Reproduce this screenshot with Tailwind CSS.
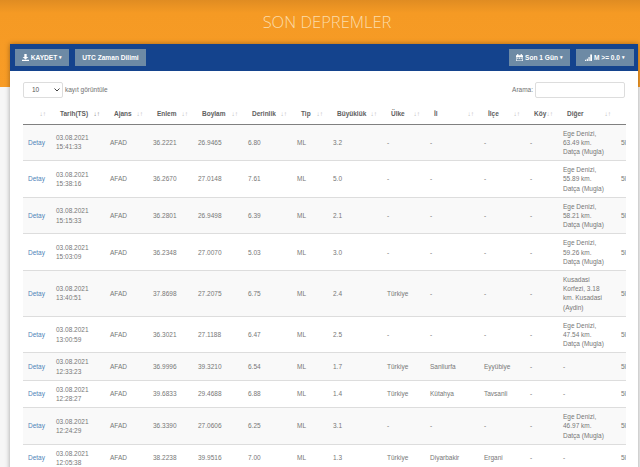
<!DOCTYPE html>
<html lang="tr">
  <head>
    <meta charset="UTF-8" />
    <title>Son Depremler</title>
    <script src="https://cdn.jsdelivr.net/npm/@tailwindcss/browser@4"></script>
  </head>
  <body class="h-[467px] overflow-hidden bg-[#f6f6f6] font-['Liberation_Sans',Arial,sans-serif]">
    <header class="h-[87px] bg-gradient-to-b from-[#e08c22] via-[#f59a24] via-15% to-[#f89c26] pt-[12px] pl-[14px] text-center">
      <h1 class="font-['Open_Sans',sans-serif] text-[16.5px] leading-[20px] font-light text-[#fbdcaa]">SON DEPREMLER</h1>
    </header>

    <main class="-mt-[43px] ml-[10px] h-[430px] w-[628px] overflow-hidden bg-white shadow-[0_0_5px_rgba(0,0,0,0.35)]">
      <div class="flex h-[27px] items-center justify-between bg-[#14438d] pr-[4px] pl-[5px] text-[6.6px] font-bold text-white">
        <div class="flex gap-[6px]">
          <button class="flex h-[17px] w-[54px] items-center justify-center gap-[2px] bg-[#6d8aa5]">
            <svg class="h-[7px] w-[7px]" viewBox="0 0 12 12" fill="white"><path d="M4 0h4v5h3L6 9.5 1 5h3zM0 10h12v2H0z" /></svg>
            KAYDET <span class="text-[5px]">▾</span>
          </button>
          <button class="h-[17px] w-[71px] bg-[#6d8aa5]">UTC Zaman Dilimi</button>
        </div>
        <div class="flex gap-[6px]">
          <button class="flex h-[17px] w-[61px] items-center justify-center gap-[2px] bg-[#6d8aa5]">
            <svg class="h-[7px] w-[7px]" viewBox="0 0 12 12" fill="white"><path d="M0 2h12v10H0zM1 5v6h10V5zM2 6h2v2H2zM5 6h2v2H5zM8 6h2v2H8zM2 0h2v2H2zM8 0h2v2H8z" /></svg>
            Son 1 Gün <span class="text-[5px]">▾</span>
          </button>
          <button class="flex h-[17px] w-[58px] items-center justify-center gap-[2px] bg-[#6d8aa5]">
            <svg class="h-[7px] w-[7px]" viewBox="0 0 12 12" fill="white"><path d="M0 10h2v2H0zM3 8h2v4H3zM6 5h2v7H6zM9 1h3v11H9z" /></svg>
            M &gt;= 0.0 <span class="text-[5px]">▾</span>
          </button>
        </div>
      </div>

      <div class="flex items-start justify-between pt-[11px] pr-[13px] pl-[13px] text-[6.5px] text-[#707070]">
        <div class="flex items-center gap-[2px]">
          <div class="flex h-[16px] w-[40px] items-center justify-between rounded-[2px] border border-[#ddd] pr-[2px] pl-[8px] text-[#555]">
            <span>10</span>
            <svg class="h-[4px] w-[6px]" viewBox="0 0 6 4" fill="none" stroke="#444" stroke-width="1"><path d="M0.5 0.5 3 3 5.5 0.5" /></svg>
          </div>
          <span>kayıt görüntüle</span>
        </div>
        <div class="flex items-center gap-[2px]">
          <span>Arama:</span>
          <div class="h-[16px] w-[90px] rounded-[2px] border border-[#ddd]"></div>
        </div>
      </div>

      <div class="mt-[6px] ml-[13px] w-[603px] overflow-hidden">
        <table class="w-[640px] table-fixed border-collapse text-left text-[6.5px] leading-[9.2px] text-[#777]">
          <colgroup>
            <col class="w-[28px]" /><col class="w-[54px]" /><col class="w-[43px]" /><col class="w-[45px]" />
            <col class="w-[50px]" /><col class="w-[49px]" /><col class="w-[36px]" /><col class="w-[54px]" />
            <col class="w-[43px]" /><col class="w-[54px]" /><col class="w-[46px]" /><col class="w-[33px]" />
            <col class="w-[58px]" /><col class="w-[47px]" />
          </colgroup>
          <thead>
            <tr id="head" class="h-[20px] border-b-[1.5px] border-[#808080]"></tr>
          </thead>
          <tbody id="rows"></tbody>
        </table>
      </div>
    </main>

    <script>
      const basliklar = ["", "Tarih(TS)", "Ajans", "Enlem", "Boylam", "Derinlik", "Tip", "Büyüklük", "Ülke", "İl", "İlçe", "Köy", "Diğer", ""];

      const ege = (km) => `Ege Denizi,<br>${km} km.<br>Datça (Mugla)`;

      const depremler = [
        ["15:41:33", "36.2221", "26.9465", "6.80", "3.2", "-", "-", "-", ege("63.49")],
        ["15:38:16", "36.2670", "27.0148", "7.61", "5.0", "-", "-", "-", ege("55.89")],
        ["15:15:33", "36.2801", "26.9498", "6.39", "2.1", "-", "-", "-", ege("58.21")],
        ["15:03:09", "36.2348", "27.0070", "5.03", "3.0", "-", "-", "-", ege("59.26")],
        ["13:40:51", "37.8698", "27.2075", "6.75", "2.4", "Türkiye", "-", "-", "Kusadasi<br>Korfezi, 3.18<br>km. Kusadasi<br>(Aydin)"],
        ["13:00:59", "36.3021", "27.1188", "6.47", "2.5", "-", "-", "-", ege("47.54")],
        ["12:33:23", "36.9996", "39.3210", "6.54", "1.7", "Türkiye", "Sanliurfa", "Eyyübiye", "-"],
        ["12:28:27", "39.6833", "29.4688", "6.88", "1.4", "Türkiye", "Kütahya", "Tavsanli", "-"],
        ["12:24:29", "36.3390", "27.0606", "6.25", "3.1", "-", "-", "-", ege("46.97")],
        ["12:05:38", "38.2238", "39.9516", "7.00", "1.3", "Türkiye", "Diyarbakir", "Ergani", "-"],
      ];

      document.getElementById("head").innerHTML = basliklar
        .map((b, i) => {
          const renk = i === 1 ? "text-[#888]" : "text-[#bbb]";
          return `<th class="p-0 font-bold text-[#606060]"><div class="flex items-center justify-between pr-[5px] pl-[9px]"><span>${b}</span><span class="${renk} text-[6.5px] font-normal">↓↑</span></div></th>`;
        })
        .join("");

      document.getElementById("rows").innerHTML = depremler
        .map((d, i) => {
          const zebra = i % 2 === 0 ? "bg-[#f9f9f9]" : "bg-white";
          const hucre = (t) => `<td class="px-[5px] py-[4px]">${t}</td>`;
          return `<tr class="${zebra} border-b border-[#ddd]">
            <td class="px-[5px] py-[4px] text-[#4f84b8]">Detay</td>
            ${hucre(`03.08.2021<br>${d[0]}`)}
            ${hucre("AFAD")}${hucre(d[1])}${hucre(d[2])}${hucre(d[3])}${hucre("ML")}${hucre(d[4])}
            ${hucre(d[5])}${hucre(d[6])}${hucre(d[7])}${hucre("-")}${hucre(d[8])}
            <td class="py-[4px] pl-[5px] whitespace-nowrap">5l</td>
          </tr>`;
        })
        .join("");
    </script>
  </body>
</html>
